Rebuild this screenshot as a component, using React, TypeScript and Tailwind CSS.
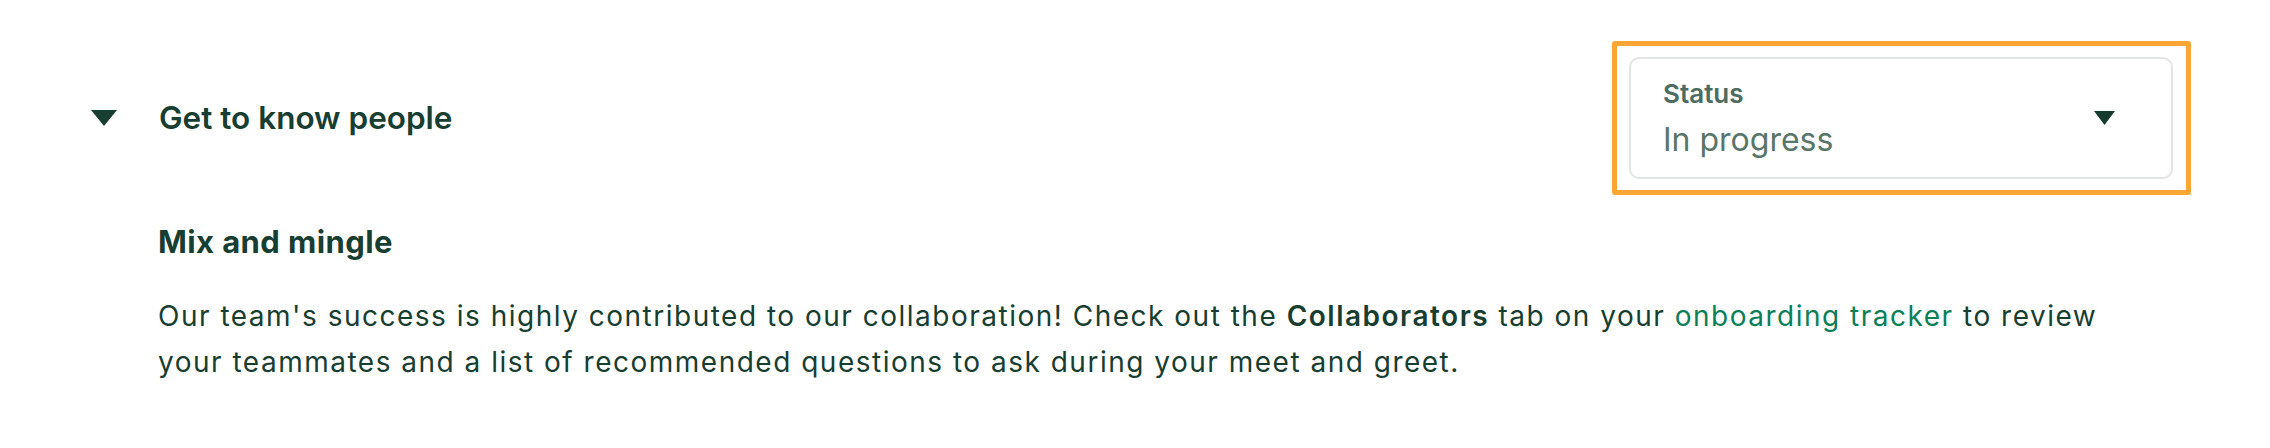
function Caret({ className }: { className?: string }) {
  return (
    <svg viewBox="0 0 26 16" className={className} fill="currentColor" preserveAspectRatio="none">
      <path d="M0 0 H26 L13 16 Z" />
    </svg>
  );
}

function StatusSelect() {
  return (
    <div className="rounded-[3px] border-[5px] border-[#fba634] py-[11px] pl-[12px] pr-[13px]">
      <div className="flex h-[122px] w-[544px] items-center justify-between rounded-[10px] border-2 border-[#e2e5e3] bg-white pl-[32px] pr-[56px]">
        <div className="flex flex-col">
          <span className="text-[26px] font-semibold leading-[30px] text-[#4d6b60]">Status</span>
          <span className="mt-[13px] text-[32px] leading-[36px] text-[#587569]">In progress</span>
        </div>
        <Caret className="h-[14px] w-[21px] text-[#173a2f]" />
      </div>
    </div>
  );
}

export default function App() {
  return (
    <div
      className="min-h-[448px] w-full bg-white pl-[91px] pr-[79px] pt-[41px] text-[#183d31]"
      style={{ fontFamily: 'Inter, "Liberation Sans", sans-serif' }}
    >
      <div className="flex items-center justify-between">
        <div className="flex items-center">
          <Caret className="h-[16px] w-[26px]" />
          <h2 className="ml-[42px] text-[31.5px] font-semibold leading-[38px]">Get to know people</h2>
        </div>
        <StatusSelect />
      </div>
      <div className="pl-[67px] pt-[29px]">
        <h3 className="text-[31px] font-bold leading-[36px] tracking-[0.4px]">Mix and mingle</h3>
        <p className="mt-[33px] text-[28px] leading-[46px] tracking-[1.5px]">
          Our team's success is highly contributed to our collaboration! Check out the{' '}
          <strong className="font-semibold">Collaborators</strong> tab on your{' '}
          <a href="#" className="text-[#0b7f58]">
            onboarding tracker
          </a>{' '}
          to review
          <br />
          your teammates and a list of recommended questions to ask during your meet and greet.
        </p>
      </div>
    </div>
  );
}
